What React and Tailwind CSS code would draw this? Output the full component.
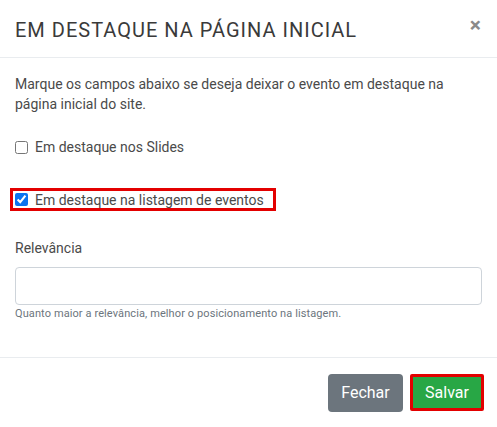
export default function App() {
  return (
    <div className="w-[497px] h-[427px] bg-white font-['Roboto',sans-serif] text-[#495057]">
      <div className="flex items-center justify-between h-[58px] pl-[15px] pr-[16px] border-b border-[#e9ecef]">
        <h5 className="text-[20px] tracking-[1px] text-[#3a3a3a] leading-none mt-[2px]">EM DESTAQUE NA PÁGINA INICIAL</h5>
        <button className="text-[#8a8a8a] text-[21px] font-bold leading-none -mt-[6px]">×</button>
      </div>

      <div className="px-[15px] pt-[16px] pb-[16px] text-[14px]">
        <p className="leading-[20px] text-[#4a4a4a]">
          Marque os campos abaixo se deseja deixar o evento em destaque na página inicial do site.
        </p>

        <label className="flex items-center gap-[7px] mt-[23px] text-[#4a4a4a]">
          <input type="checkbox" className="w-[13px] h-[13px] m-0" />
          <span className="leading-[20px]">Em destaque nos Slides</span>
        </label>

        <div className="mt-[31px] -ml-[5px] w-[266px] h-[23px] border-[3px] border-[#e30000] flex items-center pl-[2px]">
          <label className="flex items-center gap-[7px] text-[#4a4a4a]">
            <input type="checkbox" defaultChecked className="w-[13px] h-[13px] m-0 accent-[#0b73f0]" />
            <span className="leading-[20px]">Em destaque na listagem de eventos</span>
          </label>
        </div>

        <div className="mt-[27px] leading-[20px] text-[#4a4a4a]">Relevância</div>
        <input type="text" className="mt-[9px] block w-full h-[38px] border border-[#ced4da] rounded-[4px] px-3 outline-none" />
        <div className="mt-[1px] text-[11px] text-[#6c757d] leading-[16px] tracking-[0.1px]">
          Quanto maior a relevância, melhor o posicionamento na listagem.
        </div>
      </div>

      <div className="mt-[19px] border-t border-[#e9ecef] flex justify-end gap-[7px] pt-[16px] pr-[13px]">
        <button className="w-[75px] h-[38px] rounded-[4px] bg-[#6c757d] text-white text-[16px]">Fechar</button>
        <button className="w-[74px] h-[37px] bg-[#28a745] text-white text-[16px] border-[3px] border-[#e30000] rounded-[2px]">Salvar</button>
      </div>
    </div>
  );
}
